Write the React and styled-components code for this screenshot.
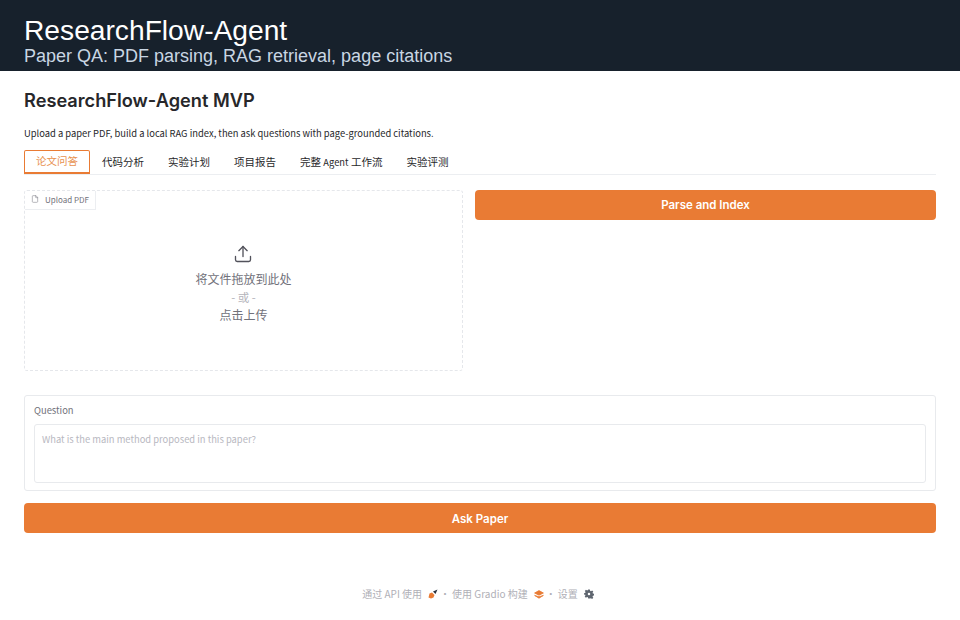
import React from "react";
import styled, { createGlobalStyle } from "styled-components";
import { FileIcon, Upload } from "lucide-react";

const cjk = `"Noto Sans CJK SC", "Noto Sans", sans-serif`;
const orange = "#e97b34";

const GlobalStyle = createGlobalStyle`
  * { margin: 0; padding: 0; box-sizing: border-box; }
  html, body { background: #fff; }
  body { font-family: ${cjk}; }
`;

const Hero = styled.header`
  height: 71px;
  background: #17212c;
  padding: 14px 24px 0;
  font-family: "Liberation Sans", Arial, sans-serif;
`;

const HeroTitle = styled.h1`
  font-size: 28.2px;
  line-height: 32px;
  font-weight: 400;
  color: #fff;
`;

const HeroSub = styled.p`
  font-size: 18px;
  line-height: 20px;
  color: #c9d6e3;
`;

const Main = styled.main`
  padding: 0 24px;
  display: flex;
  flex-direction: column;
`;

const PageTitle = styled.h2`
  margin-top: 17px;
  font-family: Inter, sans-serif;
  font-size: 18.2px;
  line-height: 24px;
  font-weight: 600;
  color: #27272a;
`;

const Intro = styled.p`
  margin-top: 14px;
  font-size: 9.4px;
  line-height: 14px;
  color: #27272a;
`;

// latin runs inside chinese text are set a bit smaller than the CJK glyphs
const Latin = styled.span`
  font-size: 0.89em;
`;

const Tabs = styled.nav`
  margin-top: 10px;
  height: 25px;
  display: flex;
  border-bottom: 1px solid #eceef1;
`;

const Tab = styled.button`
  height: 24px;
  padding: 0 ${(p) => (p.$active ? "11px" : "12px")} 2px;
  background: transparent;
  border: ${(p) => (p.$active ? `1px solid ${orange}` : "none")};
  border-bottom-width: ${(p) => (p.$active ? "2px" : "0")};
  border-radius: ${(p) => (p.$active ? "2px 2px 0 0" : "0")};
  font-family: ${cjk};
  font-size: 10.5px;
  color: ${(p) => (p.$active ? "#e8914f" : "#27272a")};
  white-space: nowrap;
`;

const TopRow = styled.section`
  margin-top: 15px;
  display: grid;
  grid-template-columns: 439px 461px;
  gap: 12px;
  align-items: start;
`;

const Dropzone = styled.div`
  position: relative;
  height: 181px;
  border: 1px dashed #e5e7eb;
  border-radius: 3px;
  display: flex;
  flex-direction: column;
  align-items: center;
  color: #71717a;
`;

const UploadTag = styled.div`
  position: absolute;
  top: 0;
  left: 0;
  height: 19px;
  width: 71px;
  padding: 0 0 2px 6px;
  display: flex;
  align-items: center;
  gap: 6px;
  border-right: 1px solid #eceef1;
  border-bottom: 1px solid #eceef1;
  font-size: 8px;
  white-space: nowrap;
  color: #71717a;
`;

const UploadIconSlot = styled.div`
  margin: 53px 2px 0 0;
  height: 20px;
  color: #52525b;
`;

const DropText = styled.p`
  font-size: 12px;
  line-height: 18px;
  color: #71717a;
  margin-top: ${(p) => p.$gap || 0}px;
`;

const DropOr = styled.p`
  font-size: 11.5px;
  line-height: 18px;
  color: #b4b4bb;
`;

const Primary = styled.button`
  height: 30px;
  width: 100%;
  border: none;
  border-radius: 4px;
  background: ${orange};
  color: #fff;
  font-family: Inter, sans-serif;
  font-size: 11.5px;
  font-weight: 600;
`;

const QuestionCard = styled.section`
  margin-top: 24px;
  height: 96px;
  padding: 7px 9px;
  border: 1px solid #e8eaed;
  border-radius: 3px;
  display: flex;
  flex-direction: column;
`;

const FieldLabel = styled.label`
  font-size: 9.4px;
  line-height: 14px;
  color: #71717a;
`;

const QuestionInput = styled.textarea`
  margin-top: 7px;
  height: 60px;
  padding: 7px;
  resize: none;
  border: 1px solid #e8eaed;
  border-radius: 3px;
  font-family: ${cjk};
  font-size: 9.4px;
  line-height: 14px;
  &::placeholder { color: #b8b8bf; opacity: 1; }
`;

const AskButton = styled(Primary)`
  margin-top: 12px;
  padding-top: 1px;
`;

const Footer = styled.footer`
  margin-top: 53px;
  padding-right: 4px;
  display: flex;
  justify-content: center;
  align-items: center;
  font-size: 10px;
  line-height: 16px;
  color: #b0b0b7;
`;

const FootLink = styled.span`
  display: flex;
  align-items: center;
  gap: 6px;
  white-space: pre;
`;

const Dot = styled.span`
  margin: 0 2px;
`;

const RocketIcon = () => (
  <svg width="10" height="10" viewBox="0 0 10 10">
    <path d="M0.500 8.500 L1.500 4.500 L4 3.500 L6.500 6 L5.500 8.500 L3 9.500 Z" fill={orange} />
    <path d="M5 2.500 L9.500 0.500 L7.500 5 Z" fill="#2b3440" />
  </svg>
);

const GradioIcon = () => (
  <svg width="10" height="9" viewBox="0 0 10 9" fill={orange} stroke={orange} strokeWidth="0.8" strokeLinejoin="round">
    <path d="M5 0.600 L9.400 3 L5 5.200 L0.600 3 Z" />
    <path d="M0.600 5.400 L5 8.200 L9.400 5.400 L5 6.800 Z" />
  </svg>
);

const GearIcon = () => (
  <svg width="10" height="10" viewBox="0 0 24 24">
    <path
      fill="#5f6670"
      fillRule="evenodd"
      d="M10 1h4l.7 3.200 2 .9 2.800-1.800 2.800 2.800-1.800 2.800.9 2 3.100.7v4l-3.100.7-.9 2 1.800 2.800-2.800 2.800-2.800-1.800-2 .9L14 23h-4l-.7-3.200-2-.9-2.800 1.800-2.800-2.800 1.800-2.800-.9-2L0 14v-4l2.800-.7.9-2L1.900 4.500l2.800-2.800 2.800 1.800 2-.9zM12 9a3 3 0 1 0 0 6 3 3 0 0 0 0-6z"
    />
  </svg>
);

const tabs = [
  "代码分析",
  "实验计划",
  "项目报告",
  <>完整 <Latin>Agent</Latin> 工作流</>,
  "实验评测",
];

export default function App() {
  return (
    <>
      <GlobalStyle />
      <Hero>
        <HeroTitle>ResearchFlow-Agent</HeroTitle>
        <HeroSub>Paper QA: PDF parsing, RAG retrieval, page citations</HeroSub>
      </Hero>
      <Main>
        <PageTitle>ResearchFlow-Agent MVP</PageTitle>
        <Intro>Upload a paper PDF, build a local RAG index, then ask questions with page-grounded citations.</Intro>
        <Tabs>
          <Tab $active>论文问答</Tab>
          {tabs.map((t, i) => (
            <Tab key={i}>{t}</Tab>
          ))}
        </Tabs>
        <TopRow>
          <Dropzone>
            <UploadTag>
              <FileIcon size={8} strokeWidth={1.5} />
              Upload PDF
            </UploadTag>
            <UploadIconSlot>
              <Upload size={20} strokeWidth={1.6} />
            </UploadIconSlot>
            <DropText $gap={6}>将文件拖放到此处</DropText>
            <DropOr>- 或 -</DropOr>
            <DropText>点击上传</DropText>
          </Dropzone>
          <Primary>Parse and Index</Primary>
        </TopRow>
        <QuestionCard>
          <FieldLabel>Question</FieldLabel>
          <QuestionInput placeholder="What is the main method proposed in this paper?" />
        </QuestionCard>
        <AskButton>Ask Paper</AskButton>
        <Footer>
          <FootLink>
            <span>通过 API 使用</span>
            <RocketIcon />
          </FootLink>
          <Dot>·</Dot>
          <FootLink>
            <span>使用 Gradio 构建</span>
            <GradioIcon />
          </FootLink>
          <Dot>·</Dot>
          <FootLink>
            <span>设置</span>
            <GearIcon />
          </FootLink>
        </Footer>
      </Main>
    </>
  );
}
